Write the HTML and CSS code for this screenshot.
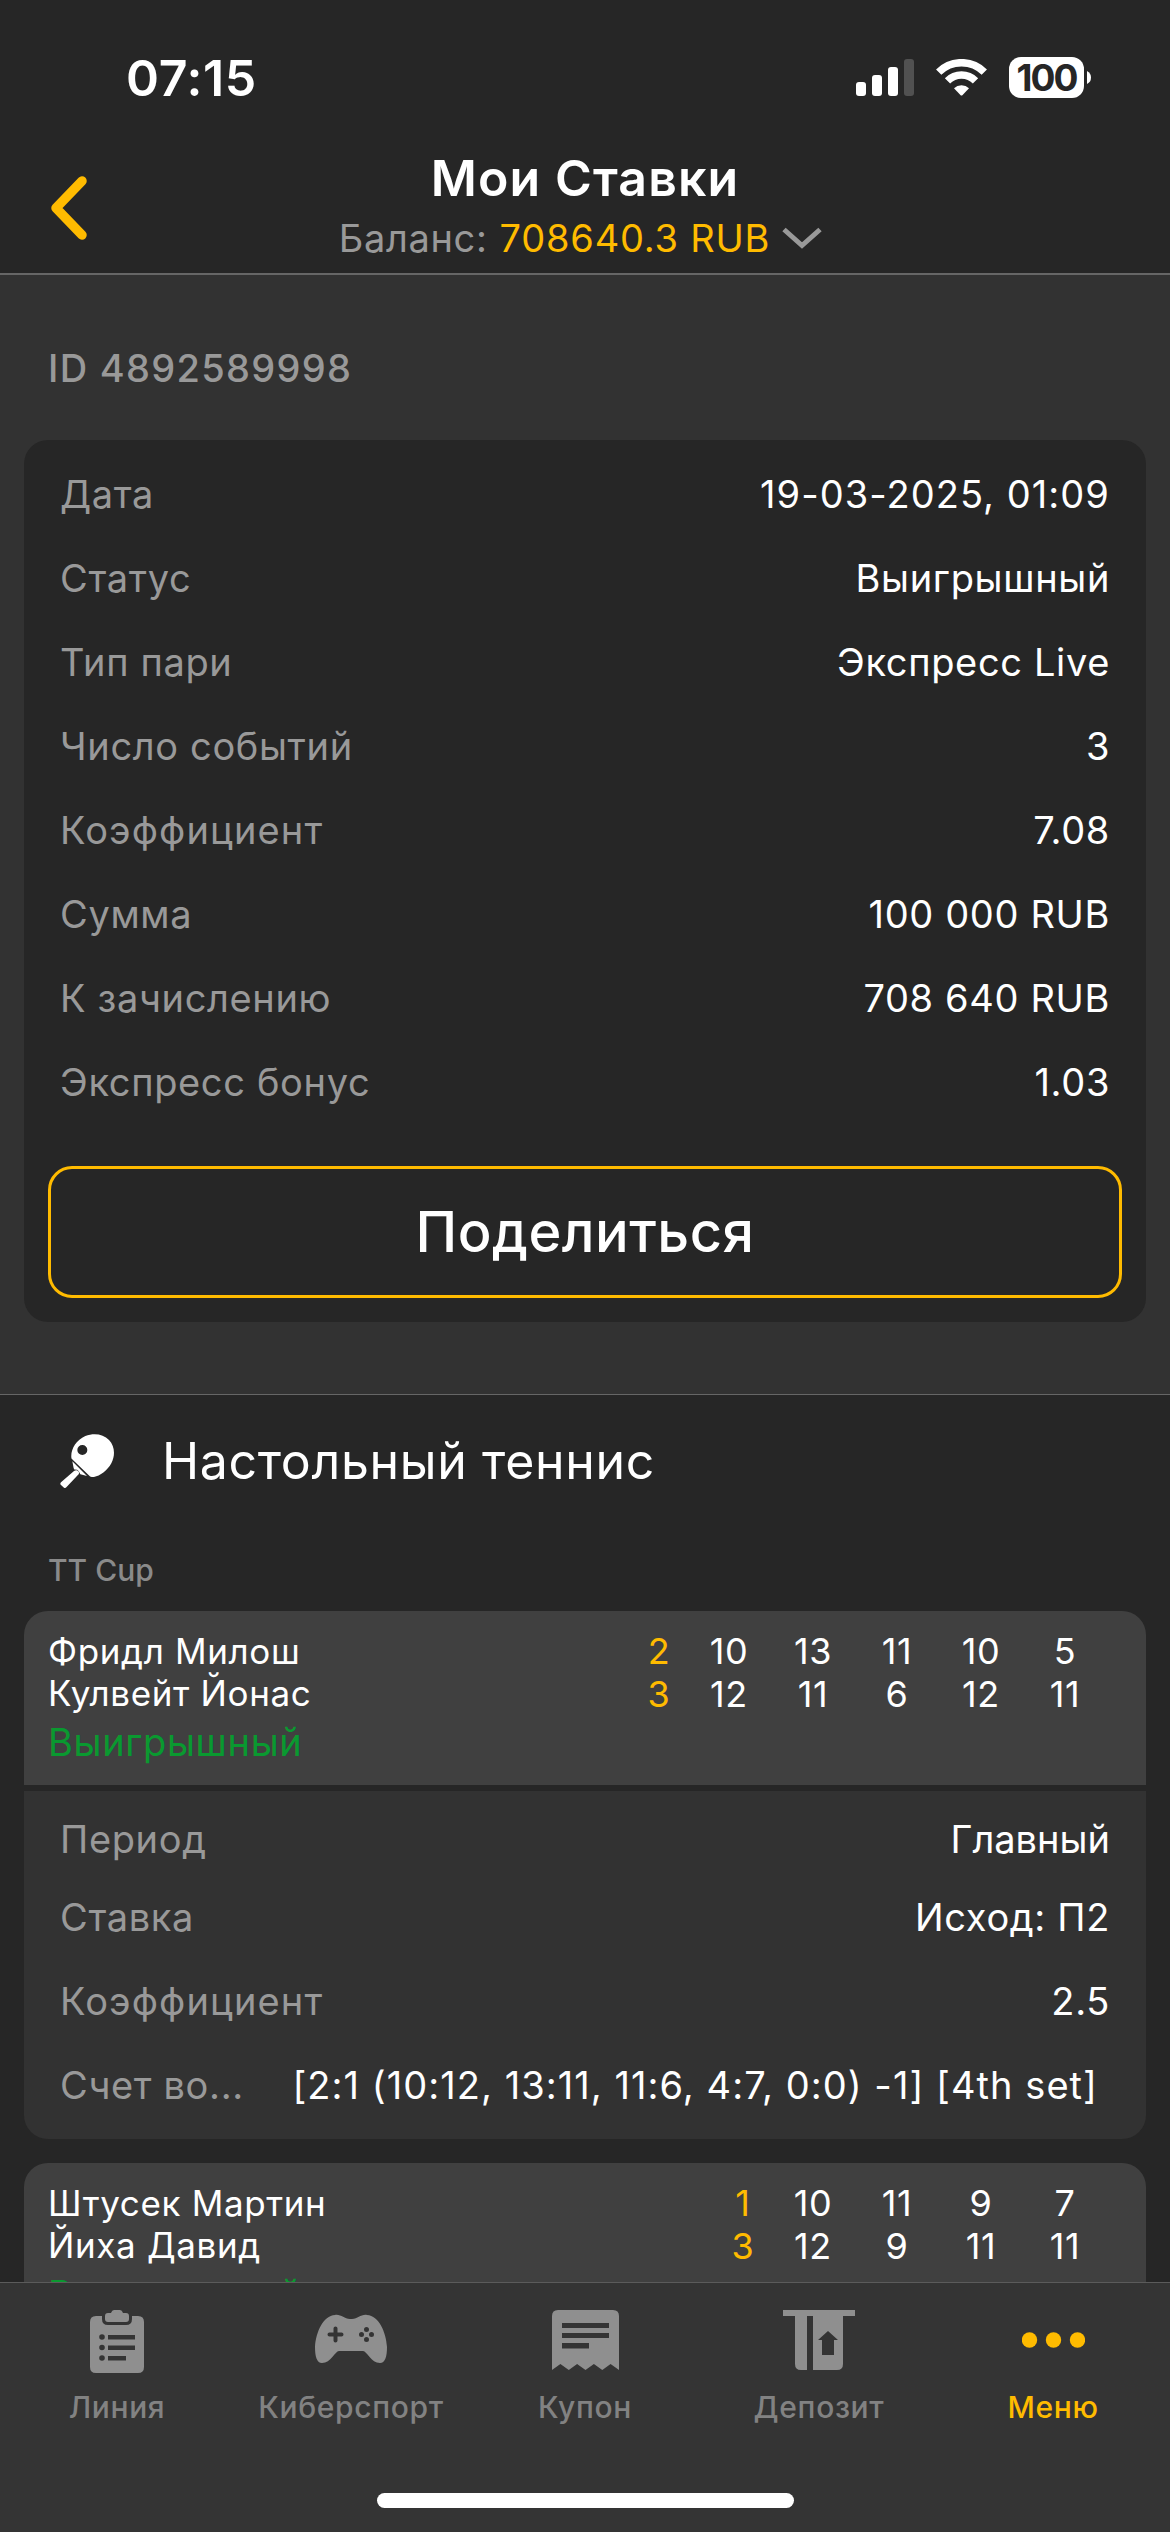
FILE: index.html
```html
<!DOCTYPE html>
<html lang="ru">
<head>
    <meta charset="UTF-8">
    <meta name="viewport" content="width=device-width, initial-scale=1.0">
    <title>Мои Ставки</title>
    <link rel="stylesheet" href="styles.css">
</head>
<body>
    <header class="header">
        <div class="status-bar">
            <span class="time">07:15</span>
            <div class="status-icons">
                <svg class="signal" width="58" height="37" viewBox="0 0 58 37" fill="#fff">
                    <rect x="0" y="23" width="10" height="14" rx="3"/>
                    <rect x="16" y="16" width="10" height="21" rx="3"/>
                    <rect x="32" y="8" width="10" height="29" rx="3"/>
                    <rect x="48" y="0" width="10" height="37" rx="3" fill="#515151"/>
                </svg>
                <svg class="wifi" width="51" height="37" viewBox="0 0 51 37">
                    <path d="M2.7 13.1A32.3 32.3 0 0 1 48.3 13.1" fill="none" stroke="#fff" stroke-width="7.5"/>
                    <path d="M11.5 21.9A19.8 19.8 0 0 1 39.5 21.9" fill="none" stroke="#fff" stroke-width="7.5"/>
                    <path d="M18 29.2A11 11 0 0 1 33 29.2L26.4 36.2Q25.5 37 24.6 36.2Z" fill="#fff"/>
                </svg>
                <div class="battery">
                    <span class="battery-level">100</span>
                    <svg width="4" height="13" viewBox="0 0 4 13" fill="#fff"><path d="M0 0Q4 2 4 6.5T0 13Z"/></svg>
                </div>
            </div>
        </div>
        <div class="nav-bar">
            <svg class="back" width="38" height="64" viewBox="0 0 38 64" fill="none" stroke="#ffbb00" stroke-width="9.5" stroke-linecap="round" stroke-linejoin="round">
                <path d="M32 5L6 32L32 59"/>
            </svg>
            <div class="nav-title">
                <h1>Мои Ставки</h1>
                <div class="balance">
                    <span class="balance-label">Баланс:</span>
                    <span class="balance-value">708640.3 RUB</span>
                    <svg width="40" height="22" viewBox="0 0 40 22" fill="none" stroke="#999" stroke-width="5"><path d="M2 2.5L20 18.5L38 2.5"/></svg>
                </div>
            </div>
        </div>
    </header>

    <main class="content">
        <section class="summary">
            <div class="bet-id">ID 4892589998</div>
            <div class="card">
                <div class="row"><span>Дата</span><b class="digits">19-03-2025, 01:09</b></div>
                <div class="row"><span>Статус</span><b>Выигрышный</b></div>
                <div class="row"><span>Тип пари</span><b>Экспресс Live</b></div>
                <div class="row"><span>Число событий</span><b>3</b></div>
                <div class="row"><span class="coef">Коэффициент</span><b>7.08</b></div>
                <div class="row"><span>Сумма</span><b>100 000 RUB</b></div>
                <div class="row"><span>К зачислению</span><b>708 640 RUB</b></div>
                <div class="row"><span>Экспресс бонус</span><b>1.03</b></div>
                <button class="share-btn">Поделиться</button>
            </div>
        </section>

        <section class="events">
            <div class="sport">
                <svg width="54" height="54" viewBox="30 42 162 162" fill="#fff">
                    <path fill-rule="evenodd" d="M64 112C62 88 78 60 106 48C132 38 160 42 177 60C195 79 196 106 184 130C172 152 150 168 132 171C126 172 122 171 118 167L68 119C65 117 64 116 64 112ZM97 75A15 15 0 1 0 97 105A15 15 0 1 0 97 75Z"/>
                    <path d="M67 124L111 168L91 163L87 155Q83 147 74 149L71 145Z"/>
                    <path d="M72 153Q80 148 85 154Q90 160 83 166L49 202Q46 205 42 203L33 195Q29 191 33 187Z"/>
                </svg>
                <h2>Настольный теннис</h2>
            </div>
            <div class="league">TT Cup</div>

            <div class="match">
                <div class="match-head">
                    <div class="teams">
                        <div>Фридл Милош</div>
                        <div>Кулвейт Йонас</div>
                        <div class="win">Выигрышный</div>
                    </div>
                    <div class="scores">
                        <div class="score total"><i>2</i><i>3</i></div>
                        <div class="score"><i>10</i><i>12</i></div>
                        <div class="score"><i>13</i><i>11</i></div>
                        <div class="score"><i>11</i><i>6</i></div>
                        <div class="score"><i>10</i><i>12</i></div>
                        <div class="score"><i>5</i><i>11</i></div>
                    </div>
                </div>
                <div class="match-info">
                    <div class="row short"><span>Период</span><b>Главный</b></div>
                    <div class="row"><span>Ставка</span><b>Исход: П2</b></div>
                    <div class="row"><span class="coef">Коэффициент</span><b>2.5</b></div>
                    <div class="row score-row"><span>Счет во...</span><b class="digits">[2:1 (10:12, 13:11, 11:6, 4:7, 0:0) -1] [4th set]</b></div>
                </div>
            </div>

            <div class="match">
                <div class="match-head">
                    <div class="teams">
                        <div>Штусек Мартин</div>
                        <div>Йиха Давид</div>
                        <div class="win">Выигрышный</div>
                    </div>
                    <div class="scores">
                        <div class="score total"><i>1</i><i>3</i></div>
                        <div class="score"><i>10</i><i>12</i></div>
                        <div class="score"><i>11</i><i>9</i></div>
                        <div class="score"><i>9</i><i>11</i></div>
                        <div class="score"><i>7</i><i>11</i></div>
                    </div>
                </div>
            </div>
        </section>
    </main>

    <footer class="footer">
        <nav class="tabs">
            <a class="tab">
                <svg width="54" height="63" viewBox="0 0 54 63" fill="#8f8f8f">
                    <path fill-rule="evenodd" d="M6 6H12V9Q12 15 18 15H36Q42 15 42 9V6H48Q54 6 54 12V57Q54 63 48 63H6Q0 63 0 57V12Q0 6 6 6ZM12 24.2A2.8 2.8 0 1 0 12 29.8A2.8 2.8 0 1 0 12 24.2ZM18 25V29.5H45V25ZM12 34.7A2.8 2.8 0 1 0 12 40.3A2.8 2.8 0 1 0 12 34.7ZM18 35.5V40H45V35.5ZM12 45.2A2.8 2.8 0 1 0 12 50.8A2.8 2.8 0 1 0 12 45.2ZM18 46V50.5H36V46Z"/>
                    <path d="M18 3H21Q22 0 24 0H30Q32 0 33 3H36Q39 3 39 6V9Q39 12 36 12H18Q15 12 15 9V6Q15 3 18 3Z"/>
                </svg>
                <span>Линия</span>
            </a>
            <a class="tab">
                <svg width="72" height="63" viewBox="0 0 72 63" fill="#8f8f8f">
                    <path fill-rule="evenodd" d="M20 5C26 4 29 9 35 9H37C43 9 46 4 52 5C64 6 71 22 72 37C72 47 70 53 65 53C56 53 52 41 48 41H24C20 41 16 53 7 53C2 53 0 47 0 37C1 22 8 6 20 5ZM18.500 18.500V22.500H14.500A2 2 0 0 0 14.500 26.500H18.500V30.500A2 2 0 0 0 22.500 30.500V26.500H26.500A2 2 0 0 0 26.500 22.500H22.500V18.500A2 2 0 0 0 18.500 18.500ZM51.500 17A2.500 2.500 0 1 0 51.500 22A2.500 2.500 0 1 0 51.500 17ZM51.500 27A2.500 2.500 0 1 0 51.500 32A2.500 2.500 0 1 0 51.500 27ZM46.500 22A2.500 2.500 0 1 0 46.500 27A2.500 2.500 0 1 0 46.500 22ZM56.500 22A2.500 2.500 0 1 0 56.500 27A2.500 2.500 0 1 0 56.500 22Z"/>
                </svg>
                <span>Киберспорт</span>
            </a>
            <a class="tab">
                <svg width="67" height="63" viewBox="0 0 67 63" fill="#8f8f8f">
                    <path fill-rule="evenodd" d="M6 0H61Q67 0 67 6V60L58.600 54L50.300 60L41.900 54L33.500 60L25.100 54L16.800 60L8.400 54L0 60V6Q0 0 6 0ZM10 13V18H57V13ZM10 23V28H57V23ZM10 33V38.500H37V33Z"/>
                </svg>
                <span>Купон</span>
            </a>
            <a class="tab">
                <svg width="72" height="63" viewBox="0 0 72 63" fill="#8f8f8f">
                    <path fill-rule="evenodd" d="M0 0H72V6H60V54Q60 60 54 60H30V6H24V60H18Q12 60 12 54V6H0ZM45 21L35 30H39V45H51V30H55Z"/>
                </svg>
                <span>Депозит</span>
            </a>
            <a class="tab active">
                <svg width="63" height="63" viewBox="0 0 63 63" fill="#ffbb00">
                    <circle cx="7.500" cy="30" r="7.700"/>
                    <circle cx="31.500" cy="30" r="7.700"/>
                    <circle cx="55.500" cy="30" r="7.700"/>
                </svg>
                <span>Меню</span>
            </a>
        </nav>
        <div class="home-indicator"></div>
    </footer>
</body>
</html>
```
FILE: styles.css
```css
* {
    box-sizing: border-box;
}
body {
    margin: 0;
    width: 1170px;
    height: 2532px;
    display: flex;
    flex-direction: column;
    overflow: hidden;
    background: #262626;
    color: #fff;
    font-family: Inter, 'Noto Sans', sans-serif;
    font-size: 38px;
    letter-spacing: 0.65px;
}
h1, h2, b, i {
    margin: 0;
    font-weight: 400;
    font-style: normal;
}
svg {
    display: block;
    flex-shrink: 0;
}

/* header */
.header {
    height: 275px;
    border-bottom: 2px solid #666;
    flex-shrink: 0;
}
.status-bar {
    display: flex;
    justify-content: space-between;
    align-items: center;
    height: 155px;
    padding: 0 79px 0 126px;
}
.time {
    font-size: 50px;
    font-weight: 600;
    line-height: 60px;
}
.status-icons {
    display: flex;
    align-items: center;
}
.wifi {
    margin: 0 22px;
}
.battery {
    display: flex;
    align-items: center;
    gap: 3px;
}
.battery-level {
    width: 75px;
    height: 41px;
    border-radius: 12px;
    background: #fff;
    color: #262626;
    font-size: 37px;
    font-weight: 700;
    letter-spacing: -2px;
    line-height: 41px;
    text-align: center;
}
.nav-bar {
    display: grid;
    grid-template-columns: 90px 1fr 90px;
    padding: 0 50px;
}
.back {
    margin-top: 21px;
}
.nav-title {
    text-align: center;
}
.nav-title h1 {
    font-size: 50px;
    font-weight: 600;
    letter-spacing: 1.1px;
    line-height: 46px;
}
.balance {
    display: flex;
    justify-content: center;
    align-items: center;
    gap: 12px;
    margin: 14px 9px 0 0;
    line-height: 46px;
}
.balance-label {
    color: #999;
}
.balance-value {
    color: #fb0;
    letter-spacing: 0.8px;
}

/* bet summary */
.content {
    flex: 1;
    min-height: 0;
    overflow: hidden;
}
.summary {
    height: 1120px;
    padding: 0 24px;
    background: #323232;
    border-bottom: 1px solid #666;
}
.bet-id {
    height: 165px;
    padding: 70px 24px 0;
    color: #999;
    font-weight: 500;
    letter-spacing: 1.3px;
    line-height: 46px;
}
.card {
    height: 882px;
    padding: 12px 24px 24px;
    border-radius: 24px;
    background: #262626;
}
.row {
    display: flex;
    justify-content: space-between;
    align-items: center;
    height: 84px;
    padding: 0 12px;
    white-space: nowrap;
}
.row span {
    color: #999;
}
.row .coef {
    letter-spacing: 1.15px;
}
.row .digits {
    letter-spacing: 1.05px;
}
.share-btn {
    display: block;
    width: 100%;
    height: 132px;
    margin-top: 42px;
    border: 3px solid #fb0;
    border-radius: 24px;
    background: none;
    color: #fff;
    font-family: inherit;
    font-size: 56px;
    font-weight: 500;
    letter-spacing: 0.5px;
}

/* events */
.events {
    padding: 0 24px;
}
.sport {
    display: flex;
    align-items: center;
    gap: 48px;
    height: 132px;
    padding-left: 36px;
}
.sport h2 {
    font-size: 50px;
}
.league {
    height: 84px;
    padding: 26px 24px 0;
    color: #8a8a8a;
    font-size: 30px;
    font-weight: 500;
    letter-spacing: 0;
    line-height: 34px;
}
.match {
    margin-bottom: 24px;
}
.match-head {
    display: flex;
    justify-content: space-between;
    height: 174px;
    padding: 19px 39px 0 24px;
    border-radius: 24px 24px 0 0;
    background: #404040;
}
.teams {
    font-size: 35px;
    line-height: 42px;
}
.win {
    margin-top: 5px;
    color: #0a9930;
    font-size: 38px;
    line-height: 46px;
}
.scores {
    display: flex;
}
.score {
    display: flex;
    flex-direction: column;
    width: 84px;
    font-size: 36px;
    line-height: 43px;
    text-align: center;
}
.score.total {
    width: 56px;
    color: #fb0;
}
.match-info {
    height: 348px;
    margin-top: 6px;
    padding-top: 12px;
    border-radius: 0 0 24px 24px;
    background: #323232;
}
.match-info .row {
    padding: 0 36px;
}
.match-info .short {
    height: 72px;
}
.short b {
    letter-spacing: 0;
}
.match-info .score-row {
    padding-right: 48px;
}

/* tab bar */
.footer {
    height: 250px;
    flex-shrink: 0;
    border-top: 1px solid #5b5b5b;
    background: #343434;
}
.tabs {
    display: flex;
    padding-top: 27px;
}
.tab {
    flex: 1;
    display: flex;
    flex-direction: column;
    align-items: center;
    gap: 16px;
    color: #828282;
    font-size: 30px;
    font-weight: 500;
    line-height: 36px;
}
.tab.active {
    color: #fb0;
}
.home-indicator {
    width: 417px;
    height: 15px;
    margin: 68px auto 0;
    border-radius: 8px;
    background: #fff;
}
```
